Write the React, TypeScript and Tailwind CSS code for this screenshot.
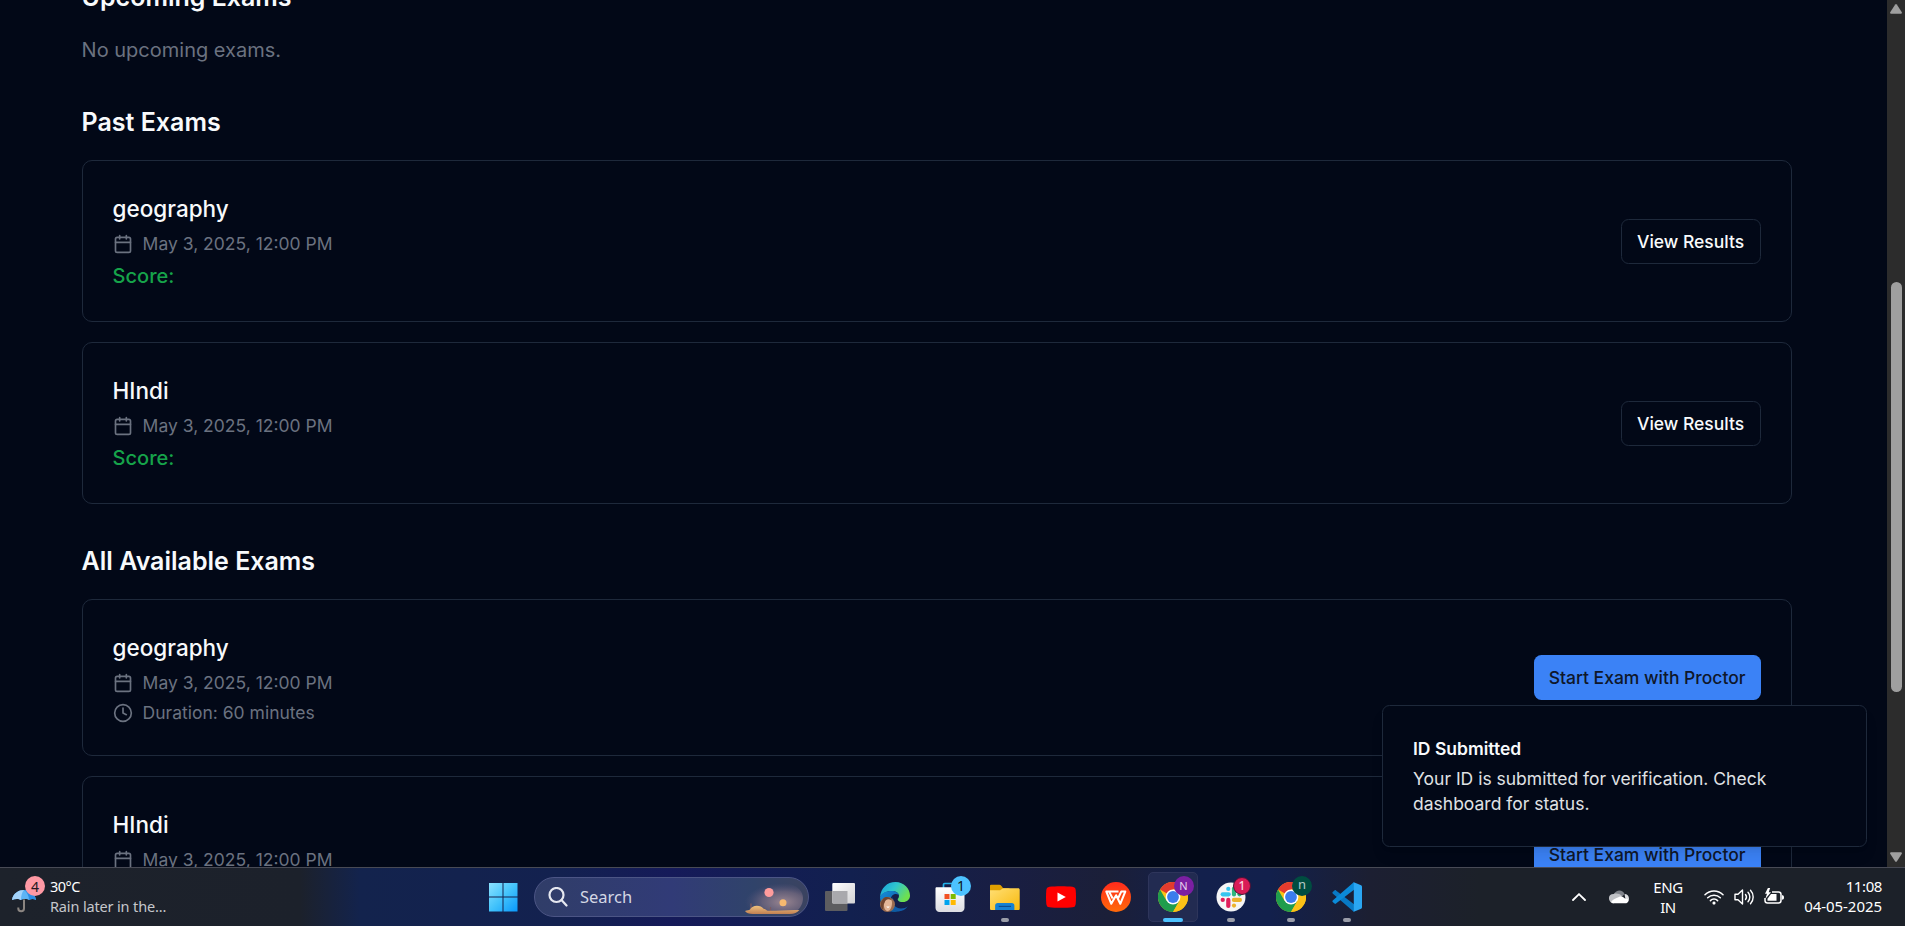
import React from "react";
import { Calendar, Clock } from "lucide-react";

const pastExams = ["geography", "HIndi"];
const availableExams = ["geography", "HIndi"];

function ExamDate() {
  return (
    <div className="mt-[5px] flex h-[25px] items-center gap-[10px] text-[17.5px] leading-[25px] text-[#6b7280]">
      <Calendar className="size-5" strokeWidth={2} />
      <span>May 3, 2025, 12:00 PM</span>
    </div>
  );
}

function Card({ title, children, action }: { title: string; children: React.ReactNode; action: React.ReactNode }) {
  return (
    <div className="flex items-center justify-between rounded-[10px] border border-[#1e293b] p-[30px]">
      <div>
        <h3 className="text-[22.5px] leading-[35px] font-medium">{title}</h3>
        <ExamDate />
        {children}
      </div>
      {action}
    </div>
  );
}

function Heading({ children }: { children: React.ReactNode }) {
  return <h2 className="mb-5 text-[25px] leading-[35px] font-semibold">{children}</h2>;
}

function Chrome() {
  return (
    <svg viewBox="0 0 30 30" className="size-[30px]">
      <circle cx="15" cy="15" r="15" fill="#fbc116" />
      <path d="M15 15 2 7.5A15 15 0 0 1 28 7.5H15Z" fill="#e33b2e" />
      <path d="M2 7.5A15 15 0 0 0 15 30l6.5-11.3L15 15 8.5 18.7Z" fill="#1f9d4d" />
      <path d="M28 7.5H15v7.5l6.5 3.7L15 30A15 15 0 0 0 28 7.5Z" fill="#fbc116" />
      <circle cx="15" cy="15" r="7.4" fill="#fff" />
      <circle cx="15" cy="15" r="5.9" fill="#3b7ded" />
    </svg>
  );
}

function TaskView() {
  return (
    <svg viewBox="0 0 30 28" className="h-7 w-[30px]">
      <defs>
        <linearGradient id="tv" x2="1" y2="1"><stop stopColor="#fff" /><stop offset="1" stopColor="#d2d2d4" /></linearGradient>
      </defs>
      <rect x="0" y="8" width="22.5" height="20" rx="1" fill="#5d5d60" />
      <rect x="7.3" y="0" width="22.7" height="20.5" rx="1" fill="url(#tv)" />
      <path d="M7.3 8H22.5V20.5H8.3a1 1 0 0 1-1-1Z" fill="#a9a9ad" />
    </svg>
  );
}

function Edge() {
  return (
    <svg viewBox="0 0 30 30" className="size-[30px]">
      <defs>
        <linearGradient id="eg1" x2="1" y2=".5"><stop stopColor="#169ddb" /><stop offset=".5" stopColor="#2fc5cf" /><stop offset="1" stopColor="#6ee04f" /></linearGradient>
        <linearGradient id="eg2" x2="1" y2="1"><stop stopColor="#168fdd" /><stop offset="1" stopColor="#0b4f91" /></linearGradient>
      </defs>
      <path d="M0 15C1 6 7 0 15.5 0 24 0 30 6.5 30 13.5c0 4-3 6.5-7 6.5-3 0-5.300-1-5.300-2.600 0-.9 1.300-1.400 1.300-3.700 0-2.500-3-4.700-7-4.700C6 9 2 11.500 0 15Z" fill="url(#eg1)" />
      <path d="M0 15c2-4 6-6 12-6 4 0 7 2.200 7 4.700 0-1-2-2.200-4-1.700-4 1-5 5-4 9 1.500 5 6 7 11 7-2 1.300-4.500 2-7 2C7 30 0 24 0 15Z" fill="url(#eg2)" />
      <path d="M13 15c-2 6 2 11.500 8 11.500 3 0 5-.7 6.800-2.200C24.500 29 20 30 16 28.500c-4-1.500-7-8-3-13.500Z" fill="#105ca9" />
      <circle cx="7.500" cy="22.500" r="7.500" fill="#9b6c50" />
      <path d="M4 17.500c3-3 8-1 8 3 0 4-1.500 8.500-4.500 8.500s-4.500-5.500-3.500-11.500Z" fill="#e3b698" />
      <path d="M3 17c2-3 7-2.500 8.500 1-4-1.500-6-.5-7 3-1.500 2-1 6-1.500 7-3-3-3-8 0-11Z" fill="#704530" />
      <path d="M6.300 24.500h3.400c-.7 1.800-2.600 1.800-3.400 0Z" fill="#fff" />
    </svg>
  );
}

function Store() {
  return (
    <svg viewBox="0 0 30 30" className="size-[30px]">
      <defs><linearGradient id="st" y2="1" x2="0"><stop stopColor="#fff" /><stop offset="1" stopColor="#dcdde2" /></linearGradient></defs>
      <path d="M8.500 7V2.700c0-.8.500-1.200 1.200-1.200h10.600c.7 0 1.200.4 1.200 1.200V7" fill="none" stroke="#23b3ea" strokeWidth="1.700" />
      <path d="M.5 6.500c0-.8.400-1.300 1.200-1.300h26.600c.8 0 1.200.5 1.200 1.300V26c0 2.300-1.700 4-4 4h-21c-2.300 0-4-1.700-4-4Z" fill="url(#st)" />
      <path d="M9.500 12h5v5h-5Z" fill="#f25022" /><path d="M15.700 12h5v5h-5Z" fill="#7fba00" />
      <path d="M9.500 18h5v5h-5Z" fill="#00a4ef" /><path d="M15.700 18h5v5h-5Z" fill="#ffb900" />
    </svg>
  );
}

function Explorer() {
  return (
    <svg viewBox="0 0 31 27" className="h-[27px] w-[31px]">
      <defs><linearGradient id="ex" x2="1" y2="1"><stop stopColor="#ffdf75" /><stop offset="1" stopColor="#f8b90c" /></linearGradient></defs>
      <path d="M0 8V1.500C0 .6.600.3 1.500.3h8.200c1.200 0 1.800.7 2.800 2.200l1 1.500H20v4Z" fill="#e0a000" />
      <path d="M0 6h10.500l3-2H29c1.200 0 1.700.6 1.700 1.600V25c0 .9-.6 1.400-1.500 1.400H1.500C.6 26.400 0 25.900 0 25Z" fill="url(#ex)" />
      <path d="M5.300 26.400V22c0-1.700 1-2.700 2.700-2.700h14.500c1.700 0 2.700 1 2.700 2.700v4.400Z" fill="#1481d4" />
      <path d="M9 22.700h12.700" stroke="#0b4d91" strokeWidth="1.200" />
    </svg>
  );
}

function YouTube() {
  return (
    <svg viewBox="0 0 30 22" className="h-[22px] w-[30px]">
      <path d="M3.500.7C9 0 21 0 26.500.7 28.500 1 29.500 2.200 29.700 4c.4 4.500.4 9.500 0 14-.2 1.800-1.200 3-3.200 3.300-5.500.7-17.500.7-23 0C1.500 21 .5 19.800.3 18c-.4-4.500-.4-9.500 0-14C.5 2.200 1.500 1 3.500.7Z" fill="red" />
      <path d="m11.500 6.500 8.300 4.500-8.300 4.500Z" fill="#fff" />
    </svg>
  );
}

function Wps() {
  return (
    <svg viewBox="0 0 30 30" className="size-[30px]">
      <defs><linearGradient id="wp" x2="0" y2="1"><stop stopColor="#ff2b1c" /><stop offset="1" stopColor="#ff6a0a" /></linearGradient></defs>
      <circle cx="15" cy="15" r="15" fill="url(#wp)" />
      <path d="M17.500 9.500H5.300l5 12.300 4.800-8.600 4.200 8.600 5-12.300h-4l-3.300 7M8 9.500l3.700 7" fill="none" stroke="#fff" strokeWidth="2" strokeLinejoin="round" />
    </svg>
  );
}

function Slack() {
  return (
    <svg viewBox="0 0 30 30" className="size-[30px]">
      <circle cx="15" cy="15" r="14.500" fill="#f5f5f6" />
      <g strokeWidth="4.200" strokeLinecap="round">
        <path d="M6.700 12.300h6" stroke="#36c5f0" /><path d="M12.300 6.800v.1" stroke="#36c5f0" />
        <path d="M18 6.500v6" stroke="#2eb67d" /><path d="M23.500 12.300h.1" stroke="#2eb67d" />
        <path d="M17.900 17.900h6" stroke="#ecb22e" /><path d="M18 23.500v.1" stroke="#ecb22e" />
        <path d="M12.300 17.900v6" stroke="#e01e5a" /><path d="M6.700 17.900h.1" stroke="#e01e5a" />
      </g>
    </svg>
  );
}

function VsCode() {
  return (
    <svg viewBox="0 0 30 30" className="size-[30px]">
      <path d="m.7 10 1.800-1.600c.5-.4 1-.4 1.500 0L22 22.300V30L.7 11.400c-.5-.5-.5-1 0-1.400Z" fill="#0879c5" />
      <path d="m.7 20 1.800 1.600c.5.400 1 .4 1.500 0L22 7.700V0L.7 18.600c-.5.500-.5 1 0 1.400Z" fill="#0b8ad8" />
      <path d="M21.800.2 28.500 3c1 .4 1.500 1 1.500 2v20c0 1-.5 1.600-1.500 2l-6.700 2.800Z" fill="#2aa6f2" />
    </svg>
  );
}

type App = { name: string; cell: string; icon: React.ReactNode; badge?: React.ReactNode; active?: boolean; open?: boolean };

const apps: App[] = [
  { name: "taskview", cell: "w-[55px]", icon: <TaskView /> },
  { name: "edge", cell: "w-[55px]", icon: <Edge /> },
  { name: "store", cell: "w-[55px]", icon: <Store />, badge: <span className="absolute -top-[6px] left-[16px] flex size-5 items-center justify-center rounded-full bg-[#4cc2ff] pb-px text-[14px] text-[#101820]">1</span> },
  { name: "explorer", cell: "w-[55px]", icon: <Explorer />, open: true },
  { name: "youtube", cell: "w-[56px]", icon: <YouTube /> },
  { name: "wps", cell: "w-[55px]", icon: <Wps /> },
  { name: "chrome", cell: "w-[58px]", icon: <Chrome />, active: true, badge: <span className="absolute -top-[6px] left-[16px] flex size-5 items-center justify-center rounded-full bg-[#7b1fa2] text-[11px] text-[#e6d3ee]">N</span> },
  { name: "slack", cell: "w-[59px]", icon: <Slack />, open: true, badge: <span className="absolute -top-[5px] left-[17px] flex size-[18px] items-center justify-center rounded-full border border-[#4b1235] bg-[#d91b57] text-[12px] font-medium text-[#fbd7e2]">1</span> },
  { name: "chrome-2", cell: "w-[61px]", icon: <Chrome />, open: true, badge: <span className="absolute -top-[6px] left-[16px] flex size-5 items-center justify-center rounded-full bg-[#004d40] pb-[2px] text-[13px] text-[#b3cbc7]">n</span> },
  { name: "vscode", cell: "w-[50px]", icon: <VsCode />, open: true },
];

function Taskbar() {
  return (
    <footer className="relative z-20 flex h-[59px] shrink-0 items-center border-t border-[#484a55] bg-[linear-gradient(90deg,#1d222b_0,#1c212b_300px,#13234d_360px,#13214f_560px,#151a59_670px,#12204f_850px,#191e42_1010px,#1b1f38_1110px,#13204c_1200px,#12204c_1270px,#1c1f32_1370px,#1c2129_1480px,#1c2129_100%)] font-['Noto_Sans',sans-serif]">
      <div className="flex w-[488px] items-center pl-[11px]">
        <div className="mb-[5px] h-[37px] w-[39px]">
          <div className="relative">
            <svg viewBox="0 0 39 37" className="h-[37px] w-[39px]">
              <path d="M13 23.500v9c0 3.700-5.700 3.700-5.700 0v-1" fill="none" stroke="#8b8581" strokeWidth="2" />
              <path d="M1 24C2 17 8 14 13 14s11 3 12 10c-2-1.500-5-1.500-7 0-1.500-1.500-6-1.500-8 0-2-1.500-6-1.500-9 0Z" fill="#5eb4f5" />
              <path d="M1 24C2 17 8 14 13 14c-2 2-3 6-3 10-2-1.500-6-1.500-9 0Z" fill="#a2d3fb" />
              <path d="M13 14c5 0 11 3 12 10-2-1.500-5-1.500-7 0 0-4-2-8-5-10Z" fill="#2c8de4" />
            </svg>
            <span className="absolute top-0 left-[14px] flex size-5 items-center justify-center rounded-full bg-[#ff99a4] text-[14px] text-[#231820]">4</span>
          </div>
        </div>
        <div className="mb-[2px] text-[14.500px] leading-5">
          <div className="tracking-[-0.5px] text-white">30°C</div>
          <div className="tracking-[-0.15px] text-[#c5c7cb]">Rain later in the...</div>
        </div>
      </div>
      <div className="flex w-[46px] justify-start">
        <svg viewBox="0 0 30 30" className="size-[30px]">
          <defs><linearGradient id="wn" x2="1" y2="1"><stop stopColor="#8ce2ff" /><stop offset=".5" stopColor="#43c3fb" /><stop offset="1" stopColor="#0998fb" /></linearGradient></defs>
          <path d="M1 1h13.500v13.500H1Zm14.500 0H29.500v13.500h-14ZM1 15.500h13.500v14H1Zm14.500 0h14v14h-14Z" fill="url(#wn)" />
        </svg>
      </div>
      <div className="flex h-10 w-[275px] items-center overflow-hidden rounded-full border border-[#4c5585] bg-[linear-gradient(90deg,#303d68,#313b77_50%,#30436a_80%,#3b4360)]">
        <svg viewBox="0 0 20 20" className="ml-[13px] size-5" fill="none" stroke="#e6e8f0" strokeWidth="2.200" strokeLinecap="round"><circle cx="8.500" cy="8" r="7" /><path d="m13.500 13 5 5.500" /></svg>
        <span className="mt-px ml-3 text-[16.500px] text-[#d4d7e4]">Search</span>
        <svg viewBox="0 0 64 38" className="mr-1 ml-auto h-[38px] w-[64px]">
          <defs>
            <radialGradient id="sky" cx=".68" cy=".6" r=".62"><stop stopColor="#a08a94" stopOpacity=".95" /><stop offset=".55" stopColor="#74697f" stopOpacity=".75" /><stop offset="1" stopColor="#54527a" stopOpacity="0" /></radialGradient>
            <linearGradient id="sand" x2="0" y2="1"><stop stopColor="#f0c27e" /><stop offset="1" stopColor="#c18052" /></linearGradient>
          </defs>
          <path d="M2 6h48c8 2 13 8 13 14 0 7-4 12-10 16H9C3 31 0 14 2 6Z" fill="url(#sky)" />
          <circle cx="29" cy="14.500" r="4.600" fill="#ff9c9c" /><circle cx="43" cy="24.800" r="3.500" fill="#f6b96f" />
          <path d="M11 32v-6.500M30.500 33v-4" stroke="#7c5a60" strokeWidth="1.200" />
          <path d="M5 33c2-.8 4-.4 5-1.500 2-5 11-5 13.500-.8 1.500.3 3 1.300 4 2.100 8 .4 20-1.300 32-.8-3 3.200-6 4-10 4H13c-4 0-7-1-8-3Z" fill="url(#sand)" />
        </svg>
      </div>
      <div className="ml-[3.500px] flex">
        {apps.map((app) => (
          <div key={app.name} className={`${app.cell} flex h-[58px] items-center justify-center`}>
            <div className={`relative flex h-[50px] w-[50px] items-center justify-center rounded-[5px] ${app.active ? "border border-[#2e355b] bg-[#222b51]" : ""}`}>
              <div className="relative flex size-[30px] items-center justify-center">
                {app.icon}
                {app.badge}
              </div>
              {app.active && <span className="absolute -bottom-px h-1 w-5 rounded-full bg-[#4cc2ff]" />}
              {app.open && <span className="absolute bottom-0 h-1 w-2 rounded-full bg-[#9a9da9]" />}
            </div>
          </div>
        ))}
      </div>
      <div className="mr-[23px] ml-auto flex items-center text-[15px] leading-5 text-white">
        <svg viewBox="0 0 14 8" className="mr-[23px] h-2 w-[14px]" fill="none" stroke="#fff" strokeWidth="1.800" strokeLinecap="round"><path d="m1 7 6-5.800L13 7" /></svg>
        <svg viewBox="0 0 20 14" className="mr-[22px] h-[14px] w-5">
          <path d="M5 4C7-.8 14-.8 15.500 4L12 8Z" fill="#7e8289" />
          <path d="M4.500 4C0 4-.8 8 .5 10.500 1.500 13 3.500 13.300 5 13.300L13 6C10.500 3.500 7 3.200 4.500 4Z" fill="#bfc1c5" />
          <path d="M15.500 4C18 4 20 6 20 8.500 20 10 19 12 17 12Z" fill="#dedfe2" />
          <path d="M2 12C4 9 8 8 10 7c3-1.500 5 1 6 1.500 2.500 0 4 1 3.500 2.500-.5 1.700-2 2.300-3 2.300H5c-1.500 0-2.500-.5-3-1.300Z" fill="#fff" />
        </svg>
        <div className="mb-px w-[34px] text-center tracking-[-0.4px]">ENG<br />IN</div>
        <div className="ml-[19px] flex items-center gap-[10px]">
          <svg viewBox="0 0 20 16" className="h-4 w-5" fill="none" stroke="#fff" strokeWidth="1.500" strokeLinecap="round"><path d="M1 5.800a12.700 12.700 0 0 1 18 0M3.700 8.800a8.900 8.900 0 0 1 12.600 0M6.400 11.600a5.100 5.100 0 0 1 7.200 0" /><circle cx="10" cy="14" r="1.200" fill="#fff" stroke="none" /><circle cx="10" cy="14" r=".8" /></svg>
          <svg viewBox="0 0 20 18" className="h-[18px] w-5" fill="none" stroke="#fff" strokeWidth="1.400" strokeLinecap="round" strokeLinejoin="round"><path d="M1 6.300h3L8.500 2v14L4 11.700H1ZM11.500 6.500a4 4 0 0 1 0 5M14 4.300a7 7 0 0 1 0 9.400" /><path d="M16.500 2.200a10 10 0 0 1 0 13.600" /></svg>
          <svg viewBox="0 0 20 18" className="h-[18px] w-5"><path d="M8 4h6.500C16 4 17 5 17 6.500v6c0 1.500-1 2.500-2.500 2.500h-11C2 15 1 14 1 12.500V10" fill="none" stroke="#fff" strokeWidth="1.500" /><path d="M18 7.300c1.300 0 2 .5 2 2.200s-.7 2.200-2 2.200Z" fill="#fff" /><path d="M7 6h5.500v6.800h-9v-2Z" fill="#fff" /><path d="M4-.2 1 5.800h2L1.300 11 7 4.200H4.700l1.500-4.400Z" fill="#fff" /></svg>
        </div>
        <div className="mb-[2px] ml-5 w-[78px] text-right whitespace-nowrap"><div className="tracking-[-0.4px]">11:08</div><div className="tracking-[-0.05px]">04-05-2025</div></div>
      </div>
    </footer>
  );
}

function StartButton() {
  return <button className="h-[45px] w-[227px] rounded-[7.500px] bg-[#3b82f6] text-[17.500px] leading-[25px] font-medium text-[#0f172a]">Start Exam with Proctor</button>;
}

export default function App() {
  return (
    <div className="flex h-[926px] w-[1905px] flex-col overflow-hidden bg-[#020817] font-['Inter',sans-serif] text-[#f8fafc]">
      <div className="relative flex h-[867px] shrink-0 overflow-hidden">
        <main className="-mt-5 flex flex-1 flex-col gap-10 pr-[95.400px] pl-[81.600px]">
          <section>
            <Heading>Upcoming Exams</Heading>
            <p className="text-[20px] leading-[30px] text-[#6b7280]">No upcoming exams.</p>
          </section>
          <section>
            <Heading>Past Exams</Heading>
            <div className="flex flex-col gap-5">
              {pastExams.map((exam) => (
                <Card key={exam} title={exam} action={<button className="h-[45px] w-[140px] rounded-[7.500px] border border-[#1e293b] text-[17.500px] leading-[25px] font-medium">View Results</button>}>
                  <p className="mt-[5px] text-[20px] leading-[30px] font-medium text-[#16a34a]">Score:</p>
                </Card>
              ))}
            </div>
          </section>
          <section>
            <Heading>All Available Exams</Heading>
            <div className="flex flex-col gap-5">
              {availableExams.map((exam) => (
                <Card key={exam} title={exam} action={<StartButton />}>
                  <div className="mt-[5px] flex h-[25px] items-center gap-[10px] text-[17.500px] leading-[25px] text-[#6b7280]">
                    <Clock className="size-5" strokeWidth={2} />
                    <span>Duration: 60 minutes</span>
                  </div>
                </Card>
              ))}
            </div>
          </section>
        </main>
        <div className="flex w-[18px] flex-col items-center bg-[#2c2c2c]">
          <svg viewBox="0 0 12 10" className="mt-1 h-[10px] w-3" fill="#9f9f9f"><path d="M5.200.6c.5-.6 1.100-.6 1.600 0l5 7.700c.3.800 0 1.500-.9 1.500H1.100c-.9 0-1.200-.7-.9-1.500Z" /></svg>
          <div className="mt-[268px] ml-px h-[410px] w-[11px] rounded-full bg-[#9f9f9f]" />
          <svg viewBox="0 0 12 10" className="mt-auto mb-[5px] h-[10px] w-3" fill="#9f9f9f"><path d="M5.200 9.400c.5.600 1.100.6 1.600 0l5-7.700c.3-.8 0-1.500-.9-1.500H1.100c-.9 0-1.200.7-.9 1.500Z" /></svg>
        </div>
        <div className="absolute top-[705px] left-[1382px] h-[142px] w-[485px] rounded-[7.500px] border border-[#1e293b] bg-[#020817] p-[30px] text-[17.500px] leading-[25px] shadow-lg">
          <div className="font-semibold">ID Submitted</div>
          <div className="mt-[5px] w-[380px] opacity-90">Your ID is submitted for verification. Check dashboard for status.</div>
        </div>
      </div>
      <Taskbar />
    </div>
  );
}
